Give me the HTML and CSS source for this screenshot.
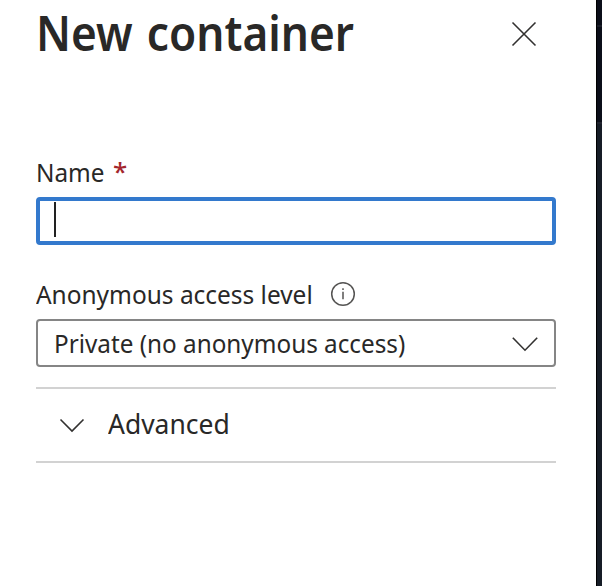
FILE: index.html
```html
<!DOCTYPE html>
<html lang="en">
<head>
<meta charset="utf-8">
<title>New container</title>
<link rel="stylesheet" href="styles.css">
</head>
<body>
<main class="panel">
  <header class="header">
    <h1 class="title"><span class="text title-text">New container</span></h1>
    <button class="close" aria-label="Close"><svg width="26" height="26" viewBox="0 0 26 26"><path d="M1.5 1.5 24.5 24.5M24.5 1.5 1.5 24.5"/></svg></button>
  </header>
  <label class="label name-label" for="name"><span class="text name-text">Name</span><span class="required">*</span></label>
  <div class="input" id="name"><span class="caret"></span></div>
  <div class="label access-label"><span class="text access-text">Anonymous access level</span><svg class="info" width="26" height="26" viewBox="0 0 26 26"><circle cx="13" cy="13" r="11.3"/><path d="M13 10.8v7.4M13 7.3v1.8"/></svg></div>
  <div class="select"><span class="text select-text">Private (no anonymous access)</span><svg width="28" height="16" viewBox="0 0 28 16"><path d="M1.8 1.8 14 14.2 26.2 1.8"/></svg></div>
  <section class="advanced"><svg width="26" height="15" viewBox="0 0 26 15"><path d="M1.5 1.5 13 13 24.5 1.5"/></svg><span class="text advanced-text">Advanced</span></section>
</main>
<aside class="edge"><div class="edge-header"></div><div class="edge-toolbar"></div></aside>
</body>
</html>
```
FILE: styles.css
```css
* { box-sizing: border-box; }
body { margin: 0; height: 586px; display: flex; overflow: hidden; background: #fff; color: #292827; font-family: "Noto Sans", sans-serif; }
.panel { width: 596px; padding: 0 40px 0 36px; }
.edge { width: 6px; background: #161c26; border-left: 1px solid #000; }
.edge-header { height: 27px; background: #0b0e19; border-bottom: 2px solid #1b1e29; }
.edge-toolbar { height: 97px; background: #0b0e19; border-bottom: 2px solid #20232e; }
.text { display: block; flex: none; white-space: nowrap; transform-origin: left center; }
.header { display: flex; justify-content: space-between; height: 157px; }
.title { margin: 0; font-size: 48px; line-height: 66px; font-weight: 600; }
.title-text { width: 342px; word-spacing: 3px; transform: scaleX(.92); }
.close { border: 0; padding: 0; background: none; width: 26px; height: 26px; margin: 21px 19px 0 0; }
svg { display: block; flex: none; fill: none; stroke: #323130; stroke-width: 1.6; }
.label { display: flex; align-items: center; font-size: 26px; line-height: 30px; }
.name-label { height: 30px; margin-bottom: 10px; }
.name-text { width: 68px; transform: scaleX(.935); }
.required { color: #a4262c; font-size: 26px; font-weight: 500; margin: -3px 0 0 9px; }
.input { height: 48px; border: 4px solid #3379cd; border-radius: 4px; padding: 1px 14px; }
.caret { display: block; width: 2px; height: 35px; background: #222; }
.access-label { height: 30px; margin: 34px 0 10px; }
.access-text { width: 277px; transform: scaleX(.94); }
.info { margin-left: 17px; stroke: #555453; stroke-width: 1.5; }
.select { height: 48px; border: 2px solid #858585; border-radius: 4px; display: flex; align-items: center; justify-content: space-between; padding: 0 15px 0 16px; font-size: 26px; }
.select-text { width: 352px; transform: scaleX(.934); }
.select svg { margin-top: 1px; }
.advanced { margin-top: 20px; height: 76px; border: solid #d2d2d2; border-width: 2px 0; display: flex; align-items: center; gap: 23px; padding-left: 23px; font-size: 27px; }
.advanced-text { margin-top: -3px; transform: scaleX(.98); }
```
